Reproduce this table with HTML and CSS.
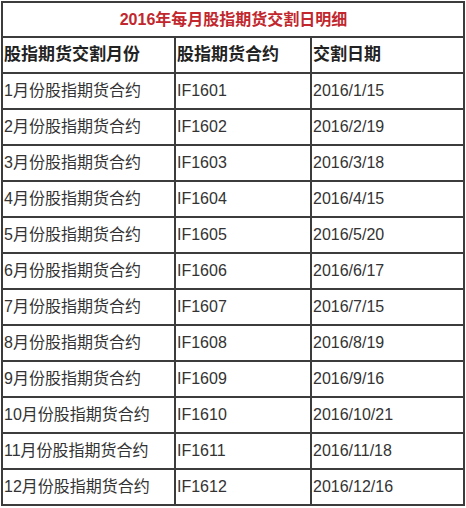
FILE: index.html
```html
<!DOCTYPE html>
<html lang="zh-CN">
<head>
<meta charset="utf-8">
<title>2016年每月股指期货交割日明细</title>
<link rel="stylesheet" href="styles.css">
</head>
<body>
<table class="schedule">
  <colgroup>
    <col class="c1">
    <col class="c2">
    <col class="c3">
  </colgroup>
  <tr class="title-row"><td colspan="3" class="title">2016年每月股指期货交割日明细</td></tr>
  <tr class="head"><td>股指期货交割月份</td><td>股指期货合约</td><td>交割日期</td></tr>
  <tr><td>1月份股指期货合约</td><td>IF1601</td><td>2016/1/15</td></tr>
  <tr><td>2月份股指期货合约</td><td>IF1602</td><td>2016/2/19</td></tr>
  <tr><td>3月份股指期货合约</td><td>IF1603</td><td>2016/3/18</td></tr>
  <tr><td>4月份股指期货合约</td><td>IF1604</td><td>2016/4/15</td></tr>
  <tr><td>5月份股指期货合约</td><td>IF1605</td><td>2016/5/20</td></tr>
  <tr><td>6月份股指期货合约</td><td>IF1606</td><td>2016/6/17</td></tr>
  <tr><td>7月份股指期货合约</td><td>IF1607</td><td>2016/7/15</td></tr>
  <tr><td>8月份股指期货合约</td><td>IF1608</td><td>2016/8/19</td></tr>
  <tr><td>9月份股指期货合约</td><td>IF1609</td><td>2016/9/16</td></tr>
  <tr><td>10月份股指期货合约</td><td>IF1610</td><td>2016/10/21</td></tr>
  <tr><td>11月份股指期货合约</td><td>IF1611</td><td>2016/11/18</td></tr>
  <tr><td>12月份股指期货合约</td><td>IF1612</td><td>2016/12/16</td></tr>
</table>
</body>
</html>
```
FILE: styles.css
```css
html, body {
  margin: 0;
  padding: 0;
  background: #ffffff;
}
body {
  padding: 1px 0 0 1px;
  font-family: "Liberation Sans", "Noto Sans CJK SC", sans-serif;
  color: #333333;
}
.schedule {
  border-collapse: collapse;
  table-layout: fixed;
  width: 462px;
  border: 2px solid #3c3c3c;
}
.c1 { width: 173px; }
.c2 { width: 136px; }
.c3 { width: 153px; }
.schedule td {
  border: 2px solid #3c3c3c;
  height: 34px;
  padding: 0 0 0 1px;
  font-size: 16px;
  line-height: 20px;
  vertical-align: middle;
  white-space: nowrap;
  overflow: hidden;
}
.title-row td {
  height: 33px;
}
.title {
  text-align: center;
  color: #c1272d;
  font-weight: bold;
  font-size: 17px;
  padding: 0;
}
.head td {
  font-weight: bold;
  font-size: 17px;
  color: #222222;
}
```
